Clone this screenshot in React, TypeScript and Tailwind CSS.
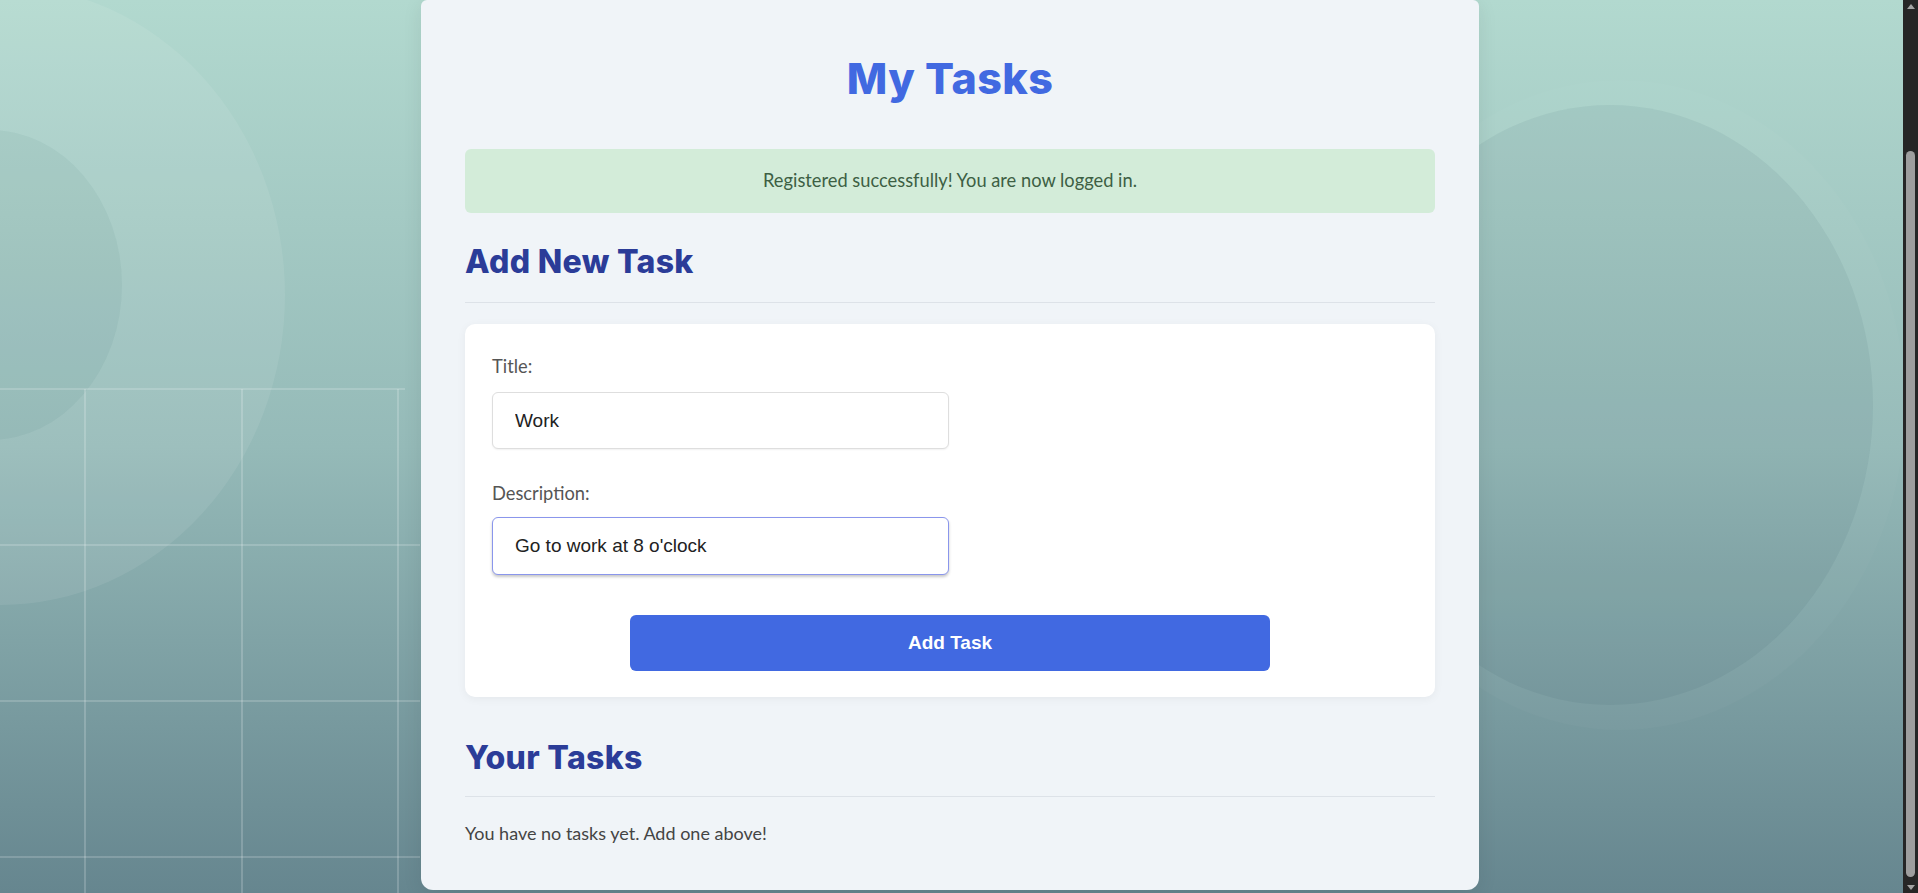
import React from "react";

const heading = { fontFamily: "Inter, 'Noto Sans', sans-serif" };
const body = { fontFamily: "Lato, 'Noto Sans', sans-serif" };
const field = { fontFamily: "'Liberation Sans', Arial, sans-serif" };

const Backdrop = () => (
    <svg
        className="absolute inset-0 w-full h-full pointer-events-none"
        viewBox="0 0 1903 893"
        preserveAspectRatio="none"
    >
        {/* left rings */}
        <ellipse cx="0" cy="295" rx="285" ry="310" fill="rgba(255,255,255,0.08)" />
        <ellipse cx="-10" cy="285" rx="132" ry="155" fill="rgba(20,70,70,0.05)" />
        {/* right blob */}
        <ellipse cx="1620" cy="405" rx="285" ry="325" fill="rgba(255,255,255,0.025)" />
        <ellipse cx="1610" cy="405" rx="263" ry="300" fill="rgba(10,50,60,0.06)" />
        {/* grid */}
        <g stroke="rgba(255,255,255,0.24)" strokeWidth="1.6">
            <line x1="0" y1="389" x2="405" y2="389" />
            <line x1="0" y1="545" x2="420" y2="545" />
            <line x1="0" y1="701" x2="420" y2="701" />
            <line x1="0" y1="857" x2="420" y2="857" />
            <line x1="85" y1="389" x2="85" y2="893" />
            <line x1="242" y1="389" x2="242" y2="893" />
            <line x1="398" y1="389" x2="398" y2="893" />
        </g>
    </svg>
);

const Scrollbar = () => (
    <div className="w-[15px] h-full bg-[#262626] flex flex-col items-center relative z-10">
        <div className="h-[12px] flex items-center">
            <div className="w-0 h-0 border-l-[4px] border-r-[4px] border-b-[5px] border-l-transparent border-r-transparent border-b-[#a3a3a3]" />
        </div>
        <div className="flex-1 w-full flex flex-col px-[3px]">
            <div className="h-[139px]" />
            <div className="h-[726px] w-full rounded-full bg-[#9e9e9e]" />
        </div>
        <div className="h-[12px] flex items-center">
            <div className="w-0 h-0 border-l-[4px] border-r-[4px] border-t-[5px] border-l-transparent border-r-transparent border-t-[#a3a3a3]" />
        </div>
    </div>
);

const App = () => {
    return (
        <div className="w-full h-[893px] flex overflow-hidden bg-gradient-to-b from-[#b2d9cf] via-[#95bab8] to-[#66868f]">
            <main className="flex-1 relative flex justify-center pr-[3px]">
                <Backdrop />
                <section className="relative w-[1058px] h-[890px] bg-[#f0f4f8] rounded-t-[6px] rounded-b-[12px] shadow-[0_4px_20px_rgba(0,0,0,0.08)] px-[44px] pt-[52px] flex flex-col">
                    <h1
                        className="text-center text-[43px] leading-[52px] font-extrabold tracking-[0.01em] text-[#4169e1]"
                        style={heading}
                    >
                        My Tasks
                    </h1>

                    <div
                        className="mt-[45px] h-[64px] rounded-[6px] bg-[#d3ecd9] flex items-center justify-center text-[18.3px] text-[#3d5f44]"
                        style={body}
                    >
                        Registered successfully! You are now logged in.
                    </div>

                    <h2
                        className="mt-[29px] text-[32px] leading-[40px] font-extrabold tracking-[0.01em] text-[#2b3c98] pb-[20px] border-b border-[#dde2e8]"
                        style={heading}
                    >
                        Add New Task
                    </h2>

                    <form className="mt-[21px] bg-white rounded-[10px] shadow-[0_2px_10px_rgba(0,0,0,0.05)] px-[27px] pt-[30px] pb-[26px] flex flex-col">
                        <label className="text-[18.3px] leading-[24px] text-[#555]" style={body}>
                            Title:
                        </label>
                        <input
                            readOnly
                            value="Work"
                            className="mt-[14px] w-[457px] h-[57px] rounded-[6px] border border-[#dedede] bg-white px-[22px] text-[19px] text-[#222] outline-none shadow-[0_1px_2px_rgba(0,0,0,0.06)]"
                            style={field}
                        />

                        <label className="mt-[32px] text-[18.3px] leading-[24px] text-[#555]" style={body}>
                            Description:
                        </label>
                        <input
                            readOnly
                            value="Go to work at 8 o'clock"
                            className="mt-[12px] w-[457px] h-[58px] rounded-[6px] border border-[#8a96ec] bg-white px-[22px] text-[19px] text-[#222] outline-none shadow-[0_2px_3px_rgba(0,0,0,0.22)]"
                            style={field}
                        />

                        <button
                            type="button"
                            className="mt-[40px] self-center w-[640px] h-[56px] rounded-[6px] bg-[#4169e1] text-white text-[19px] font-bold"
                            style={field}
                        >
                            Add Task
                        </button>
                    </form>

                    <h2
                        className="mt-[41px] text-[32px] leading-[40px] font-extrabold tracking-[0.01em] text-[#2b3c98] pb-[18px] border-b border-[#dde2e8]"
                        style={heading}
                    >
                        Your Tasks
                    </h2>

                    <p className="mt-[24px] text-[18px] leading-[24px] text-[#444]" style={body}>
                        You have no tasks yet. Add one above!
                    </p>
                </section>
            </main>
            <Scrollbar />
        </div>
    );
};

export default App;
